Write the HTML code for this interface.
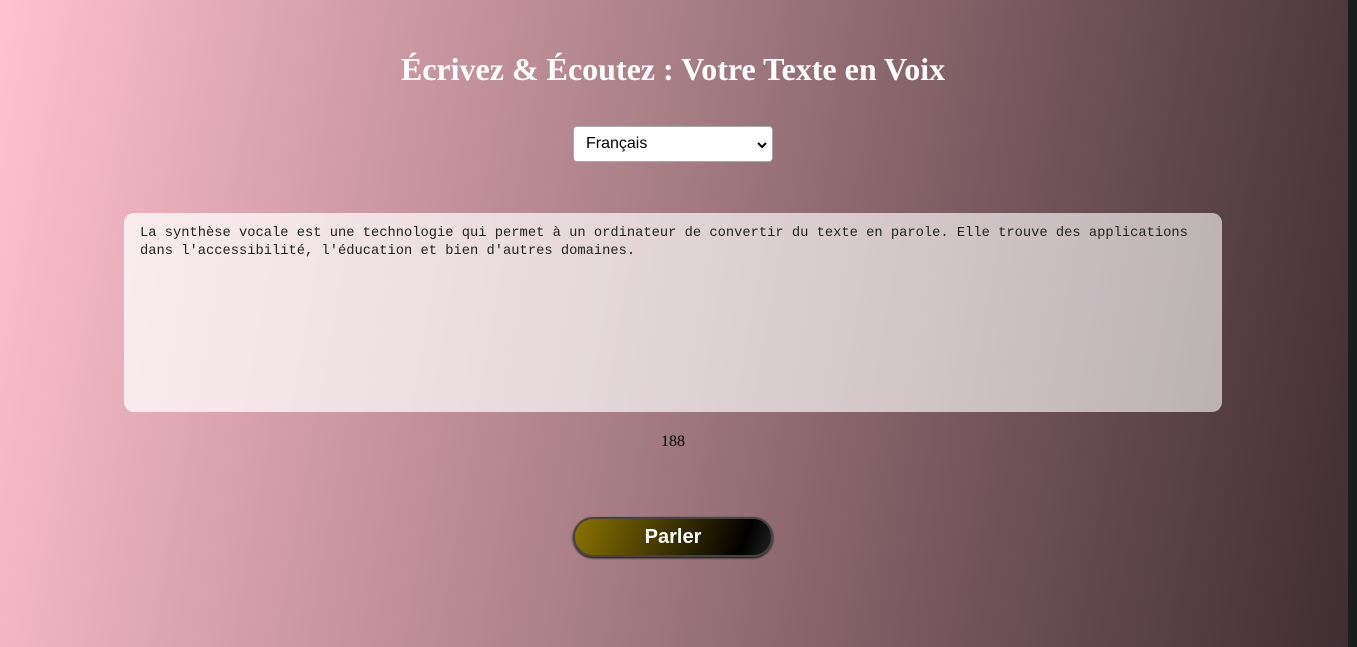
<!DOCTYPE html>
<html><head><meta charset="utf-8"><style>
html,body{margin:0;padding:0;width:1357px;height:647px;overflow:hidden;background:#1e1e1e;}
.page{position:absolute;left:0;top:0;width:1348px;height:647px;background:linear-gradient(100deg,#ffc2ce 0%,#d8a1ab 22%,#a77d84 48%,#74565c 72%,#3f2e33 100%);}
.strip{position:absolute;left:1348px;top:0;width:9px;height:647px;background:#1c1c1c;}
h1{position:absolute;left:0;width:1346px;top:51px;margin:0;text-align:center;font:bold 32px "Liberation Serif",serif;color:#fff;}
.sel{position:absolute;left:573px;top:126px;width:200px;height:36px;background:#fff;border:1px solid #aaa;border-radius:4px;box-sizing:border-box;font:16px "Liberation Sans",sans-serif;color:#000;}
.sel span{position:absolute;left:12px;top:8px;}
.sel svg{position:absolute;right:4px;top:14px;}
.ta{position:absolute;left:124px;top:213px;width:1098px;height:199px;border-radius:10px;background:linear-gradient(100deg,rgba(255,255,255,.75),rgba(255,255,255,.6));box-sizing:border-box;padding:12px 16px;font:13.75px/18px "Liberation Mono",monospace;color:#222;white-space:pre;}
.cnt{position:absolute;left:0;width:1346px;top:433px;text-align:center;font:16px "Liberation Serif",serif;color:#000;}
.btn{position:absolute;left:573px;top:517px;width:200px;height:40px;border-radius:20px;background:linear-gradient(110deg,#8a7400 0%,#4a3e00 40%,#1a1500 70%,#000 85%,#222 100%);border:2px solid #444;box-sizing:border-box;box-shadow:0 1px 2px #000;color:#fff;font:bold 20px "Liberation Sans",sans-serif;text-align:center;line-height:36px;}
</style></head><body>
<div class="page">
<h1>Écrivez &amp; Écoutez : Votre Texte en Voix</h1>
<div class="sel"><span>Français</span><svg width="12" height="8" viewBox="0 0 12 8"><path d="M2 2l4 4 4-4" stroke="#000" stroke-width="2" fill="none"/></svg></div>
<div class="ta">La synthèse vocale est une technologie qui permet à un ordinateur de convertir du texte en parole. Elle trouve des applications
dans l'accessibilité, l'éducation et bien d'autres domaines.</div>
<div class="cnt">188</div>
<div class="btn">Parler</div>
</div>
<div class="strip"></div>
</body></html>
